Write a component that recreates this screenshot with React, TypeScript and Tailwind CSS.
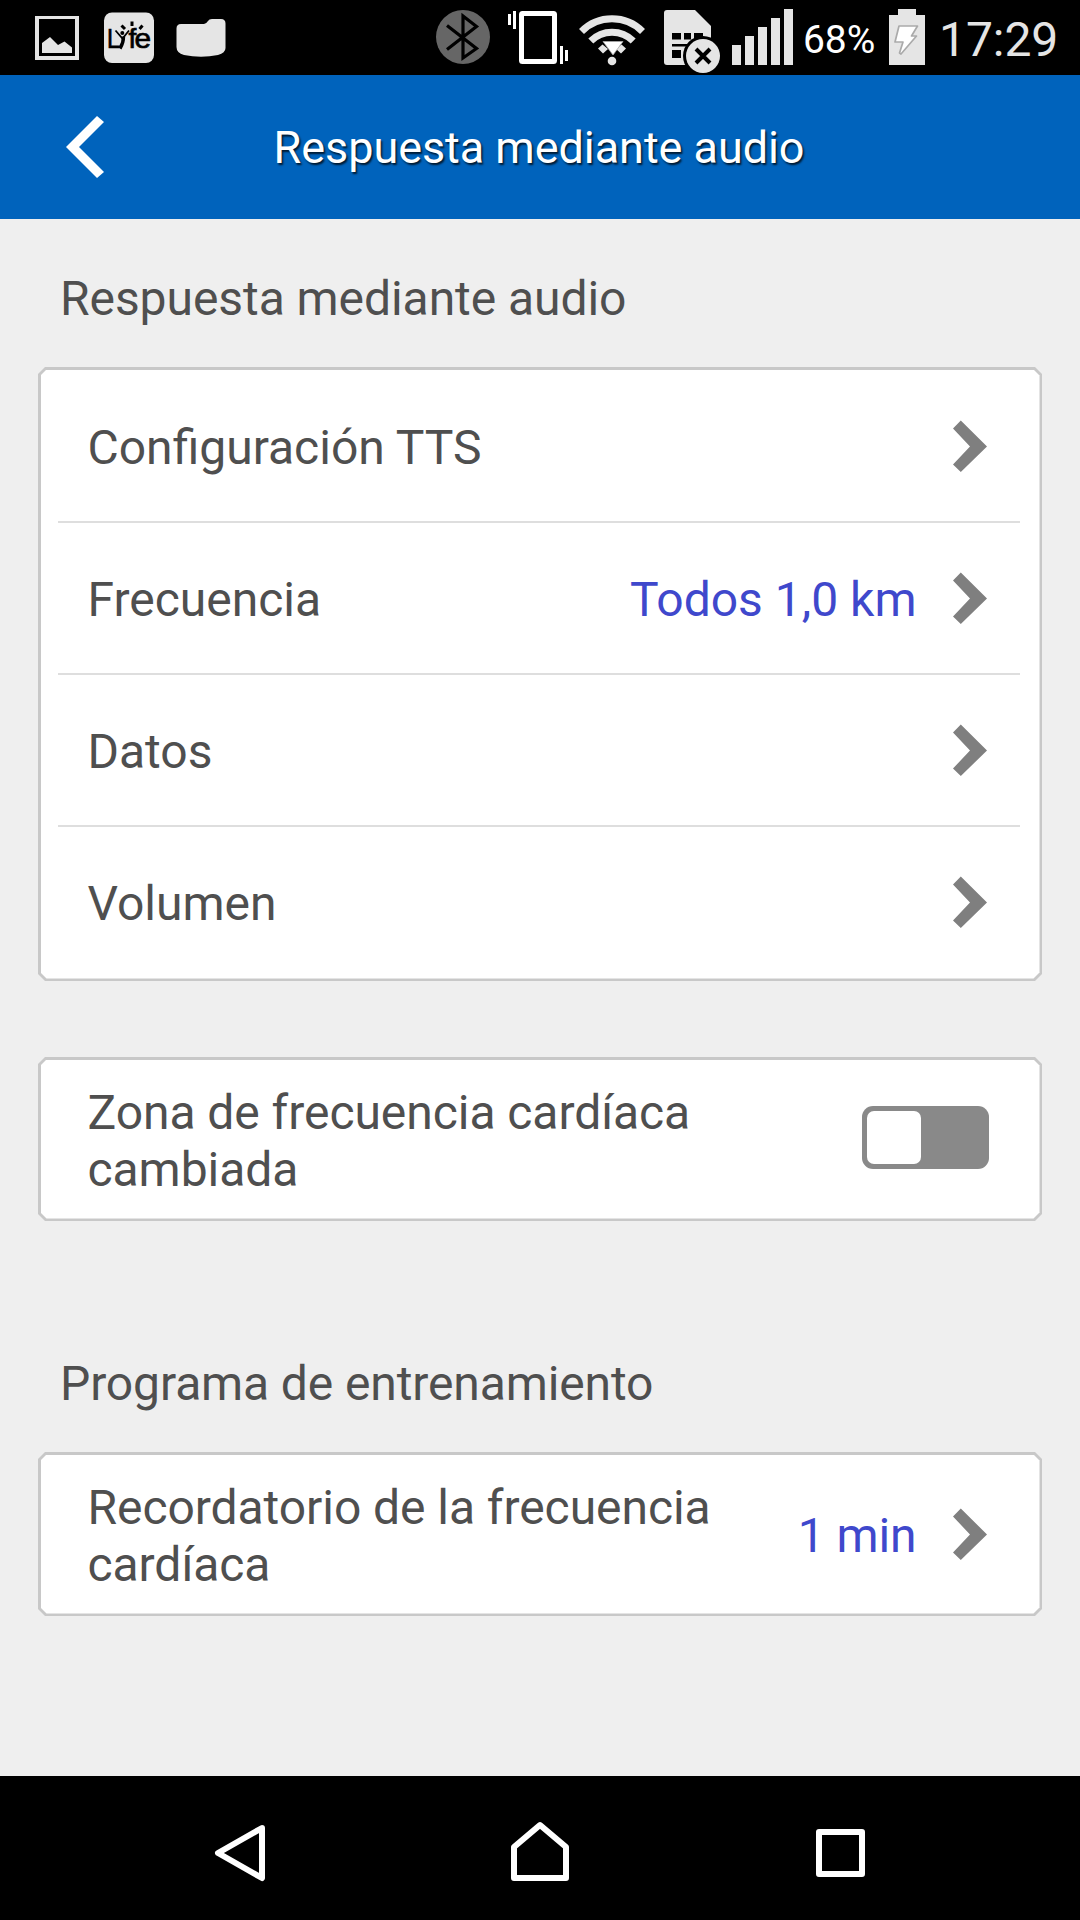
import type { ReactNode } from "react";

function StatusIcons() {
  return (
    <svg width="800" height="75" viewBox="0 0 800 75" className="block" fill="#e5e5e5">
      {/* picture */}
      <path fillRule="evenodd" d="M35 16H79V60H35ZM39 19V56H75V19Z" />
      <path d="M42 43L50 37L58 45L64.500 41.500L72 47.500V53H42Z" />
      {/* Lyfe app */}
      <rect x="104" y="12.500" width="50" height="50.500" rx="8" />
      <g fill="#000" stroke="#000" strokeWidth=".7" fontFamily="Liberation Sans" fontSize="28">
        <text x="107" y="48" textLength="13" lengthAdjust="spacingAndGlyphs">L</text>
        <text x="128.500" y="48">f</text>
        <text x="134.500" y="48" textLength="16.500" lengthAdjust="spacingAndGlyphs">e</text>
      </g>
      <g stroke="#000" fill="none">
        <path d="M115.500 30.500L122.500 38.500L129 30.500" strokeWidth="1.800" />
        <path d="M123.500 36.500Q123.500 43 120 48.500" strokeWidth="3.400" />
        <path d="M132 21.500V26M121.500 25.500L125 29M142.500 25.500L139.500 29" strokeWidth="3" />
      </g>
      <circle cx="122.300" cy="33" r="2" fill="#000" />
      {/* folder */}
      <path d="M181 24H204Q206 24 208 21Q209 19 212 19H221Q225.500 19 225.500 23.500V48Q225.500 53 218 55Q201 58.500 184 55Q176.500 53 176.500 47V28.500Q176.500 24 181 24Z" />
      {/* bluetooth */}
      <circle cx="463" cy="37" r="27" fill="#666" />
      <path d="M447 25.500L476.500 48.500L463 58V16L476.500 26.500L447 49.500" fill="none" stroke="#000" strokeWidth="3.200" />
      {/* vibrate */}
      <g fill="#fff">
        <path d="M508 14h3v11h-3zM513 11h3v18h-3zM560 46h3v18h-3zM565 50h3v11h-3z" />
        <rect x="521.500" y="13.500" width="33" height="48" rx="1" fill="none" stroke="#fff" strokeWidth="5" />
      </g>
      {/* wifi */}
      <g fill="none" stroke="#e5e5e5" strokeWidth="7">
        <path d="M581.500 31.500A43 43 0 0 1 642.500 31.500" />
        <path d="M590.800 41A30 30 0 0 1 633.200 41" />
      </g>
      <path d="M598 48.500L602.500 44.500L608 49L603 53.500ZM626 48.500L621.500 44.500L616 49L621 53.500Z" />
      <path d="M603 41.500H623L613 55Z" fill="#fff" stroke="#aaa" strokeWidth=".8" />
      <circle cx="612" cy="61" r="4.300" />
      {/* sim card */}
      <path d="M667 10H695L711 26V65H667Q664 65 664 62V13Q664 10 667 10Z" />
      <path fill="#000" d="M672 33h9v6.500h-9zM684 33h7v6.500h-7zM694 33h9v6.500h-9zM672 44h18v2.500h-18zM672 50h9v8h-9zM684 50h6v8h-6z" />
      <circle cx="703" cy="56" r="20" fill="#000" />
      <circle cx="703" cy="56" r="17" />
      <path d="M696 49L710 63M710 49L696 63" stroke="#000" strokeWidth="4" />
      {/* signal */}
      <path d="M732 45h9v20h-9zM745 36h9v29h-9zM758 27h9v38h-9zM771 18h9v47h-9zM784 9h9v56h-9z" />
    </svg>
  );
}

function BatteryIcon() {
  return (
    <svg width="36" height="56" viewBox="0 0 36 56" className="block">
      <path d="M0 6H9V0H27V6H36V56H0Z" fill="#e5e5e5" />
      <path d="M10 17H28.500L22.500 27H27.500L12 45L10.500 44L14 33H6Z" fill="#fff" stroke="#aaa" strokeWidth="1.700" strokeLinejoin="round" />
    </svg>
  );
}

function Chevron() {
  return (
    <svg width="35" height="53" viewBox="0 0 35 53" className="block shrink-0">
      <path d="M8.800 .5L35 26.500L8.800 52L1 44.500L18 26.500L1 8.500Z" fill="#7f7f7f" />
    </svg>
  );
}

function Card({ children, className = "" }: { children: ReactNode; className?: string }) {
  return (
    <div className={"mx-[38px] w-[1004px] bg-[#c8c8c8] p-[2.5px] [clip-path:polygon(7px_0,calc(100%-7px)_0,100%_7px,100%_calc(100%-7px),calc(100%-7px)_100%,7px_100%,0_calc(100%-7px),0_7px)] " + className}>
      <div className="flex h-full flex-col justify-center bg-white [clip-path:polygon(6px_0,calc(100%-6px)_0,100%_6px,100%_calc(100%-6px),calc(100%-6px)_100%,6px_100%,0_calc(100%-6px),0_6px)]">
        {children}
      </div>
    </div>
  );
}

function Row({ label, value }: { label: string; value?: string }) {
  return (
    <div className="flex h-[150px] items-center pr-[53px] pl-[47px] tracking-normal">
      <span className="flex-1 pt-[2px]">{label}</span>
      {value && <span className="mr-[35px] pt-[2px] text-[#3f48cc]">{value}</span>}
      <Chevron />
    </div>
  );
}

function Divider() {
  return <div className="mr-[19.5px] ml-[17.5px] h-[2px] bg-[#dedede]" />;
}

export default function App() {
  return (
    <div className="flex h-[1920px] w-[1080px] flex-col overflow-hidden bg-[#efefef] font-['Roboto',sans-serif] text-[48px] leading-[57px] tracking-[-0.06px] text-[#4f4f4f]">
      <div className="flex h-[75px] shrink-0 bg-black text-[#e5e5e5]">
        <StatusIcons />
        <span className="w-[89px] pt-[12px] pl-[3px] text-[39px] text-white">68%</span>
        <div className="pt-[9px]"><BatteryIcon /></div>
        <span className="pt-[11px] pl-[14px] whitespace-nowrap">17:29</span>
      </div>

      <header className="grid h-[144px] shrink-0 grid-cols-[220px_1fr_220px] items-center bg-[#0063bc]">
        <svg width="38" height="62" viewBox="0 0 38 62" className="ml-[66px] block">
          <path d="M31 0L38 6L13 31L38 56L31 62L0 31Z" fill="#fff" />
        </svg>
        <h1 className="pr-[2px] text-center text-[45px] whitespace-nowrap text-white [text-shadow:1.5px_1.5px_2px_rgba(0,0,0,0.75)]">Respuesta mediante audio</h1>
      </header>

      <main className="flex-1">
        <h2 className="mt-[51px] ml-[60px]">Respuesta mediante audio</h2>
        <Card className="mt-[40px] h-[614px]">
          <Row label="Configuración TTS" />
          <Divider />
          <Row label="Frecuencia" value="Todos 1,0 km" />
          <Divider />
          <Row label="Datos" />
          <Divider />
          <Row label="Volumen" />
        </Card>
        <Card className="mt-[76px] h-[164px]">
          <div className="flex items-center pr-[50.5px] pl-[47px]">
            <p className="flex-1 translate-y-[2px]">Zona de frecuencia cardíaca<br />cambiada</p>
            <div className="mb-[3px] h-[63px] w-[127px] rounded-[11px] bg-[#898989] p-[5px]">
              <div className="h-[53px] w-[54px] rounded-[7px] bg-white" />
            </div>
          </div>
        </Card>
        <h2 className="mt-[134px] ml-[60px] tracking-[-0.12px]">Programa de entrenamiento</h2>
        <Card className="mt-[40px] h-[164px]">
          <div className="flex items-center pr-[53px] pl-[47px]">
            <p className="flex-1 translate-y-[2px]">Recordatorio de la frecuencia<br />cardíaca</p>
            <span className="mr-[35px] translate-y-[1px] text-[#3f48cc]">1 min</span>
            <Chevron />
          </div>
        </Card>
      </main>

      <nav className="flex h-[144px] shrink-0 items-center justify-center bg-black">
        <svg width="720" height="144" viewBox="0 0 720 144" fill="none" stroke="#fff" strokeWidth="6" strokeLinejoin="round">
          <path d="M82 52L38 77L82 102Z" />
          <path d="M334 102V71L360 49L386 71V102Z" />
          <path d="M639 56H682V98H639Z" />
        </svg>
      </nav>
    </div>
  );
}
